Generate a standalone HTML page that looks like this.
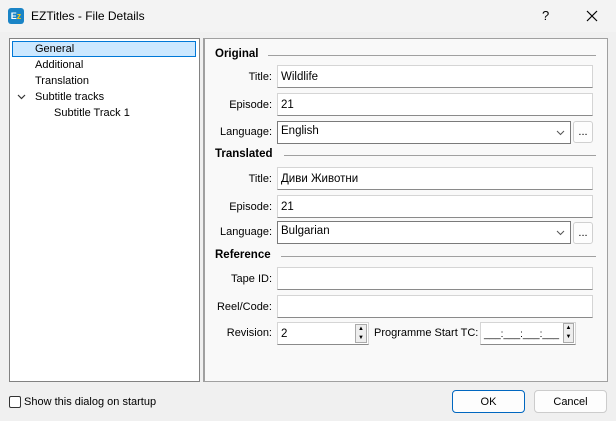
<!DOCTYPE html><html><head><style>
*{box-sizing:border-box}body{margin:0;width:616px;height:421px;background:#f0f0f0;font-family:"Liberation Sans",sans-serif;font-size:11px;color:#000;position:relative;overflow:hidden}
.a{position:absolute}
.in{position:absolute;background:#fff;border:1px solid #d5d5d5;border-bottom:1px solid #8a8a8a;height:23px;padding:5px 0 0 3px;white-space:nowrap;font-size:11.5px}
.lb{position:absolute;text-align:right;width:70px}
.hd{position:absolute;font-weight:bold;left:215px;font-size:11.5px}
.hl{position:absolute;height:1px;background:#a0a0a0;right:20px}
.bt{position:absolute;width:20px;height:22px;border:1px solid #d0d0d0;background:#fdfdfd;border-radius:3px;text-align:center;font-size:11px;padding-top:4px}
</style></head><body>
<div class="a" style="left:0;top:0;width:616px;height:32px;background:#f3f3f3"></div>
<div class="a" style="left:8px;top:8px;width:16px;height:16px;background:#1a84c6;border-radius:3px;color:#fff;font-size:9px;font-weight:bold;text-align:center;line-height:16px">E<span style="color:#f5c518">z</span></div>
<div class="a" style="left:31px;top:9px;font-size:12px">EZTitles - File Details</div>
<div class="a" style="left:542px;top:8px;font-size:13px">?</div>
<svg class="a" style="left:586px;top:10px" width="12" height="12"><path d="M1 1L11 11M11 1L1 11" stroke="#000" stroke-width="1.2"/></svg>
<div class="a" style="left:9px;top:38px;width:191px;height:344px;background:#fff;border:1px solid #828282"></div>
<div class="a" style="left:12px;top:41px;width:184px;height:16px;background:#cce8ff;border:1px solid #0078d7"></div>
<div class="a" style="left:35px;top:43px">General</div>
<div class="a" style="left:35px;top:59px">Additional</div>
<div class="a" style="left:35px;top:75px">Translation</div>
<svg class="a" style="left:17px;top:94px" width="9" height="6"><path d="M1 1L4.5 4.5L8 1" stroke="#333" fill="none" stroke-width="1.2"/></svg>
<div class="a" style="left:35px;top:91px">Subtitle tracks</div>
<div class="a" style="left:54px;top:107px">Subtitle Track 1</div>
<div class="a" style="left:203px;top:38px;width:405px;height:344px;background:#f9f9f9;border:1px solid #a0a0a0;border-left:2px solid #a0a0a0"></div>
<div class="hd" style="top:48px">Original</div><div class="hl" style="left:268px;top:55px"></div>
<div class="lb" style="left:202px;top:71px">Title:</div><div class="in" style="left:277px;top:65px;width:316px">Wildlife</div>
<div class="lb" style="left:202px;top:99px">Episode:</div><div class="in" style="left:277px;top:93px;width:316px">21</div>
<div class="lb" style="left:202px;top:126px">Language:</div><div class="in" style="left:277px;top:121px;width:294px;border:1px solid #7a7a7a;padding-top:3px">English<svg class="a" style="right:5px;top:8px" width="9" height="6"><path d="M1 1L4.5 4.5L8 1" stroke="#555" fill="none"/></svg></div><div class="bt" style="left:573px;top:121px">...</div>
<div class="hd" style="top:148px">Translated</div><div class="hl" style="left:284px;top:155px"></div>
<div class="lb" style="left:202px;top:173px">Title:</div><div class="in" style="left:277px;top:167px;width:316px">Диви Животни</div>
<div class="lb" style="left:202px;top:201px">Episode:</div><div class="in" style="left:277px;top:195px;width:316px">21</div>
<div class="lb" style="left:202px;top:226px">Language:</div><div class="in" style="left:277px;top:221px;width:294px;border:1px solid #7a7a7a;padding-top:3px">Bulgarian<svg class="a" style="right:5px;top:8px" width="9" height="6"><path d="M1 1L4.5 4.5L8 1" stroke="#555" fill="none"/></svg></div><div class="bt" style="left:573px;top:222px">...</div>
<div class="hd" style="top:249px">Reference</div><div class="hl" style="left:281px;top:256px"></div>
<div class="lb" style="left:202px;top:273px">Tape ID:</div><div class="in" style="left:277px;top:267px;width:316px"></div>
<div class="lb" style="left:202px;top:301px">Reel/Code:</div><div class="in" style="left:277px;top:295px;width:316px"></div>
<div class="lb" style="left:202px;top:327px">Revision:</div><div class="in" style="left:277px;top:322px;width:92px">2</div>
<div class="a" style="left:355px;top:324px;width:12px;height:19px;border:1px solid #aaa;background:#eee;font-size:6px;line-height:9px;text-align:center">▲<br>▼</div>
<div class="a" style="left:374px;top:327px">Programme Start TC:</div>
<div class="in" style="left:480px;top:322px;width:96px;font-size:10px;padding-top:6px">___:___:___:___</div>
<div class="a" style="left:563px;top:323px;width:11px;height:20px;border:1px solid #aaa;background:#eee;font-size:6px;line-height:9px;text-align:center">▲<br>▼</div>
<div class="a" style="left:9px;top:396px;width:12px;height:12px;border:1px solid #333;background:#fff;border-radius:2px"></div>
<div class="a" style="left:24px;top:396px">Show this dialog on startup</div>
<div class="a" style="left:452px;top:390px;width:73px;height:23px;border:1px solid #0067c0;border-radius:4px;background:#fdfdfd;text-align:center;padding-top:5px">OK</div>
<div class="a" style="left:534px;top:390px;width:73px;height:23px;border:1px solid #ccc;border-radius:4px;background:#fdfdfd;text-align:center;padding-top:5px">Cancel</div>
</body></html>
